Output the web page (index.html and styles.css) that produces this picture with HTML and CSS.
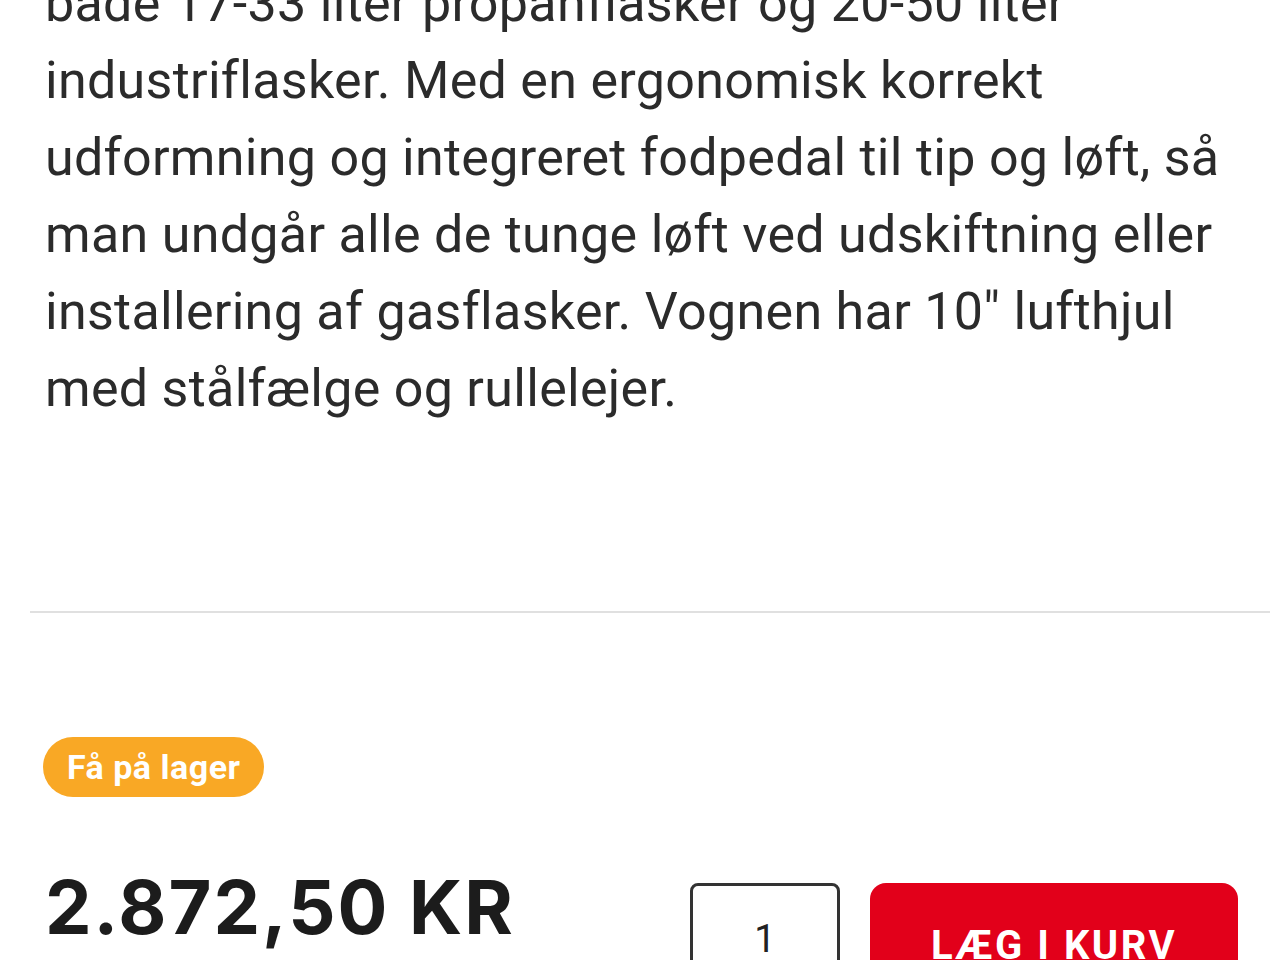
FILE: index.html
```html
<!DOCTYPE html>
<html lang="da">
<head>
  <meta charset="UTF-8" />
  <title>Gasflaskevogn</title>
  <link rel="stylesheet" href="styles.css">
</head>
<body>
  <div class="description">
    <p>både 17-33 liter propanflasker og 20-50 liter industriflasker. Med en ergonomisk korrekt udformning og integreret fodpedal til tip og løft, så man undgår alle de tunge løft ved udskiftning eller installering af gasflasker. Vognen har 10" lufthjul med stålfælge og rullelejer.</p>
  </div>

  <hr class="divider">

  <div class="buy-box">
    <span class="stock-badge">Få på lager</span>
    <div class="buy-row">
      <div class="price">2.872,50 KR</div>
      <div class="cart-controls">
        <input class="qty" type="text" value="1">
        <button class="add-to-cart">LÆG I KURV</button>
      </div>
    </div>
  </div>
</body>
</html>
```

FILE: styles.css
```css
body {
  margin: 0;
  background: #fff;
  font-family: Roboto, "Noto Sans", sans-serif;
  color: #2b2b2b;
  overflow: hidden;
}
.description {
  padding: 0 45px;
  margin-top: -35px;
}
.description p {
  margin: 0;
  font-size: 52px;
  line-height: 77px;
  letter-spacing: 0.3px;
}
.divider {
  border: none;
  border-top: 2px solid #e0e0e0;
  margin: 184px 10px 0 30px;
}
.buy-box {
  padding: 124px 42px 0 43px;
}
.stock-badge {
  display: inline-block;
  background: #f9a825;
  color: #fff;
  font-weight: bold;
  font-size: 34px;
  line-height: 60px;
  letter-spacing: 0.5px;
  padding: 0 24px;
  border-radius: 30px;
}
.buy-row {
  display: flex;
  justify-content: space-between;
  align-items: flex-start;
  margin-top: 71px;
}
.price {
  font-family: Inter, Roboto, sans-serif;
  font-weight: bold;
  font-size: 74px;
  line-height: 1;
  letter-spacing: 2px;
  color: #1c1c1c;
  margin-left: 2px;
  margin-top: 2px;
}
.cart-controls {
  display: flex;
  gap: 30px;
  margin-top: 15px;
}
.qty {
  width: 150px;
  height: 112px;
  box-sizing: border-box;
  border: 3px solid #333;
  border-radius: 8px;
  font-family: Roboto, sans-serif;
  font-size: 38px;
  text-align: center;
  color: #222;
  padding: 0;
}
.add-to-cart {
  width: 368px;
  height: 124px;
  background: #e2001a;
  color: #fff;
  border: none;
  border-radius: 16px;
  font-family: Roboto, sans-serif;
  font-weight: bold;
  font-size: 40px;
  letter-spacing: 2.5px;
  cursor: pointer;
}
```
